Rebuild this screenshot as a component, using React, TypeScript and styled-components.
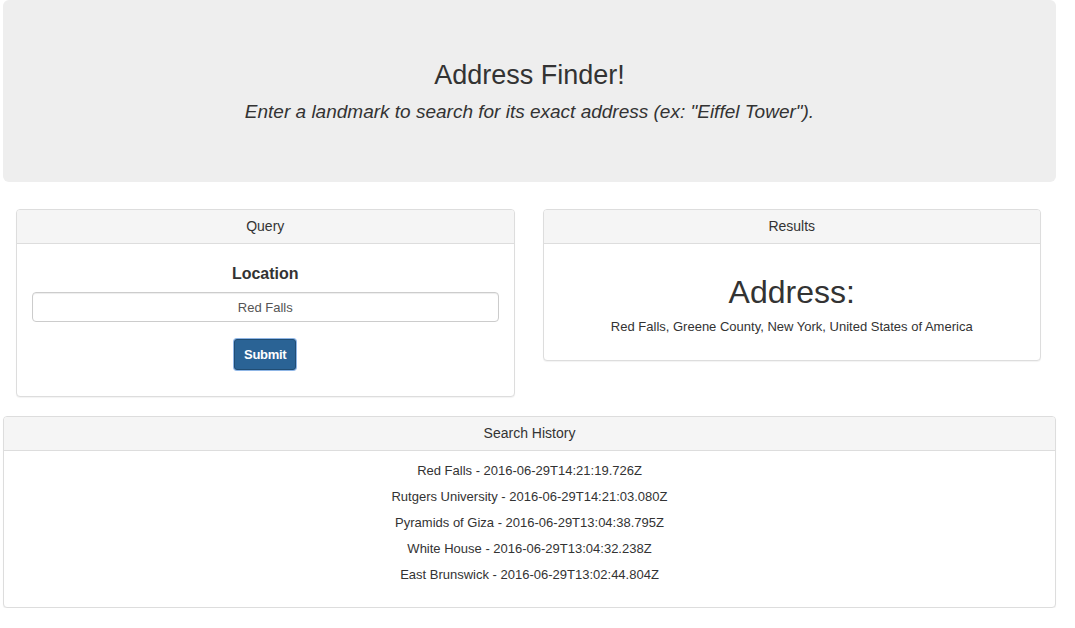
import React, { useState } from 'react';
import styled, { createGlobalStyle } from 'styled-components';

const GlobalStyle = createGlobalStyle`
  body {
    margin: 0;
    background: #fff;
    font-family: "Liberation Sans", Arial, Helvetica, sans-serif;
    font-size: 13px;
    color: #333;
  }
`;

const Page = styled.div`
  width: 1053px;
  padding-left: 3px;
`;

const Jumbotron = styled.div`
  background: #eee;
  border-radius: 6px;
  padding: 60px 20px 58px;
  text-align: center;
  margin-bottom: 27px;
`;

const Title = styled.h1`
  margin: 0 0 10px;
  font-size: 27px;
  line-height: 30px;
  font-weight: 400;
`;

const Lead = styled.p`
  margin: 0;
  font-size: 19px;
  line-height: 24px;
  font-style: italic;
`;

const Row = styled.div`
  display: grid;
  grid-template-columns: 1fr 1fr;
  gap: 28px;
  padding: 0 15px 0 13px;
  align-items: start;
  margin-bottom: 19px;
`;

const Panel = styled.div`
  border: 1px solid #ddd;
  border-radius: 4px;
  background: #fff;
  box-shadow: 0 1px 1px rgba(0, 0, 0, 0.05);
  overflow: hidden;
`;

const PanelHeading = styled.div`
  background: #f5f5f5;
  border-bottom: 1px solid #ddd;
  padding: 8px 15px;
  font-size: 14px;
  line-height: 17px;
  text-align: center;
`;

const PanelBody = styled.div<{ $bottom?: number }>`
  padding: 15px 15px ${(p) => p.$bottom ?? 15}px;
  text-align: center;
`;

const Label = styled.label`
  display: block;
  margin-top: 5px;
  margin-bottom: 8px;
  font-size: 16px;
  line-height: 20px;
  font-weight: 700;
`;

const Input = styled.input`
  display: block;
  box-sizing: border-box;
  width: 100%;
  height: 30px;
  padding: 5px 12px;
  border: 1px solid #ccc;
  border-radius: 4px;
  box-shadow: inset 0 1px 1px rgba(0, 0, 0, 0.075);
  font-family: inherit;
  font-size: 13px;
  color: #555;
  text-align: center;
  outline: none;
`;

const SubmitButton = styled.button`
  margin-top: 17px;
  height: 31px;
  padding: 0 9px;
  background: #2a6395;
  color: #fff;
  border: 1px solid #204d74;
  border-radius: 3px;
  box-shadow: 0 0 0 1px #8fb6e6;
  font-family: inherit;
  font-size: 13px;
  font-weight: 700;
  letter-spacing: -0.3px;
  cursor: pointer;
`;

const AddressTitle = styled.h2`
  margin: 15px 0 8px;
  font-size: 32px;
  line-height: 36px;
  font-weight: 400;
`;

const AddressText = styled.p`
  margin: 0 0 9px;
  line-height: 18px;
`;

const HistoryList = styled.div`
  padding: 11px 15px 15px;
  text-align: center;
`;

const HistoryItem = styled.div`
  line-height: 18px;
  margin-bottom: 8px;
`;

const history = [
  'Red Falls - 2016-06-29T14:21:19.726Z',
  'Rutgers University - 2016-06-29T14:21:03.080Z',
  'Pyramids of Giza - 2016-06-29T13:04:38.795Z',
  'White House - 2016-06-29T13:04:32.238Z',
  'East Brunswick - 2016-06-29T13:02:44.804Z',
];

const App: React.FC = () => {
  const [location, setLocation] = useState('Red Falls');

  return (
    <Page>
      <GlobalStyle />
      <Jumbotron>
        <Title>Address Finder!</Title>
        <Lead>Enter a landmark to search for its exact address (ex: "Eiffel Tower").</Lead>
      </Jumbotron>

      <Row>
        <Panel>
          <PanelHeading>Query</PanelHeading>
          <PanelBody $bottom={26}>
            <Label htmlFor="location">Location</Label>
            <Input
              id="location"
              type="text"
              value={location}
              onChange={(e) => setLocation(e.target.value)}
            />
            <SubmitButton type="button">Submit</SubmitButton>
          </PanelBody>
        </Panel>

        <Panel>
          <PanelHeading>Results</PanelHeading>
          <PanelBody>
            <AddressTitle>Address:</AddressTitle>
            <AddressText>Red Falls, Greene County, New York, United States of America</AddressText>
          </PanelBody>
        </Panel>
      </Row>

      <Panel>
        <PanelHeading>Search History</PanelHeading>
        <HistoryList>
          {history.map((item) => (
            <HistoryItem key={item}>{item}</HistoryItem>
          ))}
        </HistoryList>
      </Panel>
    </Page>
  );
};

export default App;
